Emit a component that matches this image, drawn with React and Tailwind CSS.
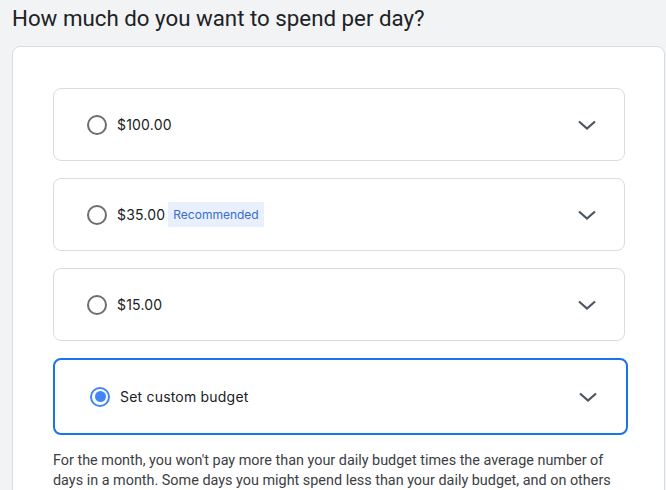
import React from 'react';

const Chevron = () => (
  <svg width="20" height="12" viewBox="0 0 20 12" className="text-[#4d5563]">
    <path d="M2 2.5 10 9.5 18 2.5" fill="none" stroke="currentColor" strokeWidth="2.2" />
  </svg>
);

const Radio = ({ checked }) =>
  checked ? (
    <span className="flex items-center justify-center w-[20px] h-[20px] rounded-full border-2 border-[#4285f4]">
      <span className="w-[11px] h-[11px] rounded-full bg-[#4285f4]" />
    </span>
  ) : (
    <span className="block w-[20px] h-[20px] rounded-full border-2 border-[#6b6e72]" />
  );

const Option = ({ label, badge, checked }) => (
  <div
    className={
      checked
        ? 'flex items-center h-[77px] w-[575px] pl-[35px] pr-[28px] rounded-lg border-2 border-[#1a73e8] bg-white'
        : 'flex items-center h-[73px] w-[572px] pl-[33px] pr-[27px] rounded-lg border border-[#dadce0] bg-white'
    }
  >
    <Radio checked={checked} />
    <span className="ml-[10px] text-[14px] text-[#202124] font-['Inter',sans-serif] tracking-[0.2px]">{label}</span>
    {badge && (
      <span className="ml-[3px] px-[5px] h-[25px] flex items-center bg-[#e8f0fe] text-[#3a6cc9] text-[12px] font-['Inter',sans-serif]">
        {badge}
      </span>
    )}
    <span className="ml-auto flex">
      <Chevron />
    </span>
  </div>
);

export default function App() {
  return (
    <div className="w-[666px] h-[490px] overflow-hidden bg-[#f1f3f4] font-['Roboto',sans-serif]">
      <h1 className="pl-[12px] pt-[3px] text-[22.3px] leading-[30px] text-[#202124]">
        How much do you want to spend per day?
      </h1>
      <div className="ml-[12px] mt-[13px] w-[653px] h-[460px] bg-white border border-[#dadce0] rounded-t-lg pl-[40px] pt-[41px]">
        <div className="flex flex-col gap-[17px]">
          <Option label="$100.00" />
          <Option label="$35.00" badge="Recommended" />
          <Option label="$15.00" />
          <Option label="Set custom budget" checked />
        </div>
        <p className="mt-[16px] w-[570px] text-[14.4px] leading-[20px] text-[#3c4043]">
          For the month, you won't pay more than your daily budget times the average number of days in a month. Some days you might spend less than your daily budget, and on others you might spend up to twice as much.
        </p>
      </div>
    </div>
  );
}
